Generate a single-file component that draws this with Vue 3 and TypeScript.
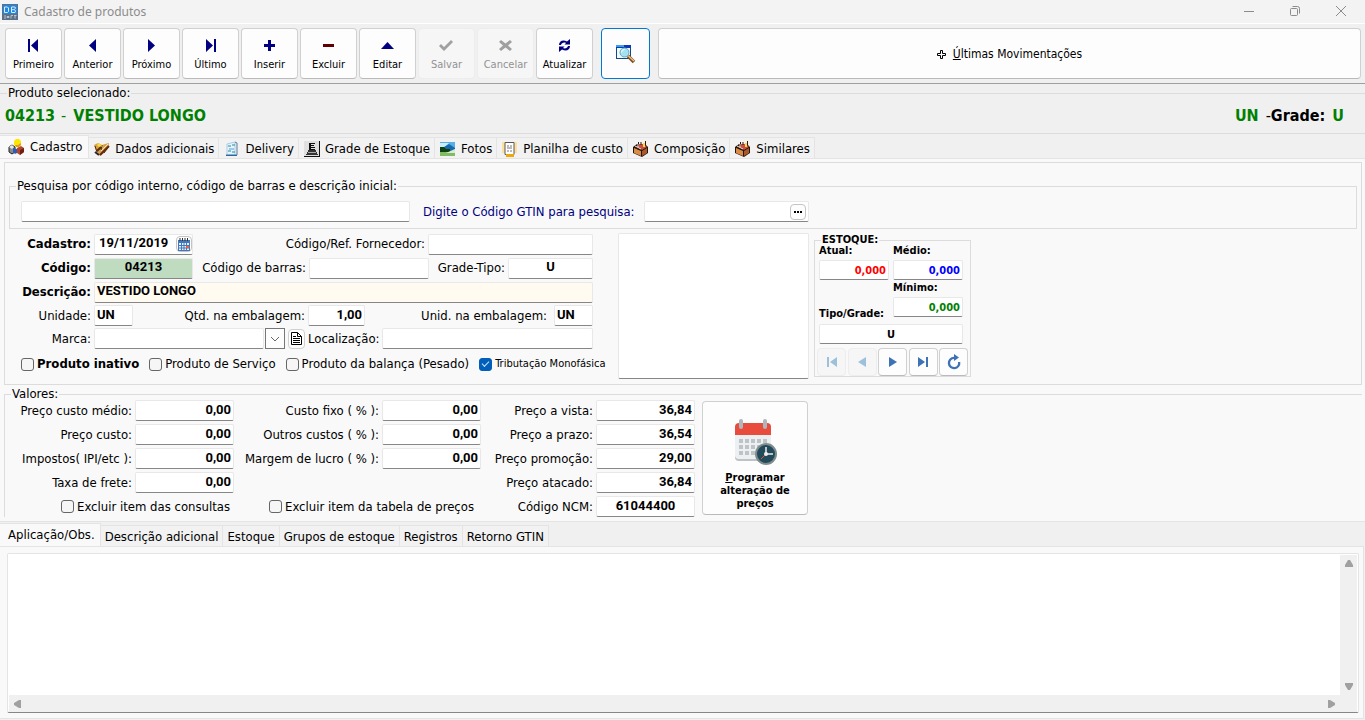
<script setup lang="ts">
import { reactive, ref } from 'vue'

interface NavAction {
  label: string
  path: string
  tone: 'navy' | 'maroon' | 'gray'
  disabled?: boolean
}

const actions: NavAction[] = [
  { label: 'Primeiro', tone: 'navy', path: 'M3 2h2v13H3zM13 2v13L6 8.5z' },
  { label: 'Anterior', tone: 'navy', path: 'M12 2v13L5 8.5z' },
  { label: 'Próximo', tone: 'navy', path: 'M5 2v13l7-6.5z' },
  { label: 'Último', tone: 'navy', path: 'M4 2v13l7-6.5zM12 2h2v13h-2z' },
  { label: 'Inserir', tone: 'navy', path: 'M7 3h3v4h4v3h-4v4H7v-4H3V7h4z' },
  { label: 'Excluir', tone: 'maroon', path: 'M3 7h11v3H3z' },
  { label: 'Editar', tone: 'navy', path: 'M2 12L8.5 5 15 12z' },
  { label: 'Salvar', tone: 'gray', disabled: true, path: 'M1 9l2-2 3 3 7-7 2 2-9 9z' },
  { label: 'Cancelar', tone: 'gray', disabled: true, path: 'M2 5l2-2 4.500 3.500L13 3l2 2-4 3.500 4 3.500-2 2-4.500-3.500L4 14l-2-2 4-3.500z' },
  { label: 'Atualizar', tone: 'navy', path: 'M3 8C3 4 7 2 11 4.500L14 2v5.500H8.500l1.500-1.500C8 5 5.500 6 5 8zM14 9c0 4-4 6-8 3.500L3 15V9.500h5.500L7 11C9 12 11.500 11 12 9z' }
]

const mainTabs = ['Cadastro', 'Dados adicionais', 'Delivery', 'Grade de Estoque', 'Fotos', 'Planilha de custo', 'Composição', 'Similares']
const noteTabs = ['Aplicação/Obs.', 'Descrição adicional', 'Estoque', 'Grupos de estoque', 'Registros', 'Retorno GTIN']
const activeMain = ref(0)
const activeNote = ref(0)

const stockNav = [
  { label: 'Primeiro estoque', path: 'M3 3h2v10H3zM13 3v10L6 8z', disabled: true },
  { label: 'Estoque anterior', path: 'M12 3v10L4 8z', disabled: true },
  { label: 'Próximo estoque', path: 'M4 3v10l8-5z', disabled: false },
  { label: 'Último estoque', path: 'M3 3v10l7-5zM11 3h2v10h-2z', disabled: false },
  { label: 'Atualizar estoque', path: 'M8 0l5 3.500L8 7V5a4 4 0 1 0 4 3h2.300A6.300 6.300 0 1 1 8 2.700z', disabled: false }
]

const product = reactive({
  search: '', gtin: '', date: '19/11/2019', ref: '', code: '04213', barcode: '', gridType: 'U',
  name: 'VESTIDO LONGO', unit: 'UN', packQty: '1,00', packUnit: 'UN', brand: '', place: '',
  inactive: false, service: false, scale: false, singlePhase: true,
  hideQueries: false, hidePrices: false, notes: ''
})

const stock = reactive({ current: '0,000', average: '0,000', minimum: '0,000', type: 'U' })

const costs = reactive([
  { id: 'avg', label: 'Preço custo médio:', value: '0,00' },
  { id: 'cost', label: 'Preço custo:', value: '0,00' },
  { id: 'tax', label: 'Impostos( IPI/etc ):', value: '0,00' },
  { id: 'freight', label: 'Taxa de frete:', value: '0,00' }
])
const margins = reactive([
  { id: 'fixed', label: 'Custo fixo ( % ):', value: '0,00' },
  { id: 'other', label: 'Outros custos ( % ):', value: '0,00' },
  { id: 'profit', label: 'Margem de lucro ( % ):', value: '0,00' }
])
const prices = reactive([
  { id: 'cash', label: 'Preço a vista:', value: '36,84', mid: false },
  { id: 'term', label: 'Preço a prazo:', value: '36,54', mid: false },
  { id: 'promo', label: 'Preço promoção:', value: '29,00', mid: false },
  { id: 'whole', label: 'Preço atacado:', value: '36,84', mid: false },
  { id: 'ncm', label: 'Código NCM:', value: '61044400', mid: true }
])
</script>

<template>
  <div class="window">
    <header class="titlebar">
      <svg class="logo" width="16" height="16" viewBox="0 0 16 16" aria-hidden="true">
        <rect width="16" height="16" fill="#5b6f86" />
        <rect x="1" y="1" width="14" height="9" fill="#2487dc" />
        <path d="M2.500 3h3l1 1v3.500l-1 1h-3zM9.500 3h3.500l.5 1-1 1.500 1 1.500-.5 1.500H9.500zM9.500 5.700h3" fill="none" stroke="#d5ecff" />
        <path d="M2 12h2M2 14h2M5 12.500v1h2v-1zM9 14.500v-3h2M12 11.500h2.500M13 12v2.500" stroke="#b9c3cd" fill="none" />
      </svg>
      <h1>Cadastro de produtos</h1>
      <div class="winbtns">
        <button type="button" aria-label="Minimizar"><svg width="12" height="12" viewBox="0 0 12 12"><path d="M1 6.500h10" /></svg></button>
        <button type="button" aria-label="Restaurar"><svg width="12" height="12" viewBox="0 0 12 12"><rect x="1.500" y="3.500" width="7" height="7" rx="1" /><path d="M3.500 1.500h5a2 2 0 0 1 2 2v5" /></svg></button>
        <button type="button" aria-label="Fechar"><svg width="12" height="12" viewBox="0 0 12 12"><path d="M1 1l10 10M11 1L1 11" /></svg></button>
      </div>
    </header>

    <nav class="toolbar">
      <button v-for="a in actions" :key="a.label" type="button" class="btn action" :disabled="a.disabled">
        <svg :class="a.tone" width="17" height="17" viewBox="0 0 17 17" aria-hidden="true"><path :d="a.path" /></svg>
        <span>{{ a.label }}</span>
      </button>
      <button type="button" class="btn find" aria-label="Localizar">
        <svg width="21" height="20" viewBox="0 0 21 20" aria-hidden="true">
          <rect x="1.500" y="2.500" width="14" height="12" fill="#eefafd" stroke="#16458a" />
          <path d="M1 1h15v3H1z" fill="#0838b4" /><path d="M1 1h8v2H1z" fill="#3a9fe8" />
          <circle cx="9.500" cy="8.500" r="4.500" fill="#a5e2f0" stroke="#68a5c4" />
          <path d="M6.500 8.500a3 3 0 0 1 3-3" stroke="#fff" fill="none" />
          <path d="M13 12l6 6" stroke="#79502a" stroke-width="3.500" /><path d="M13.500 12l5.500 5" stroke="#f1bd79" stroke-width="1.500" />
        </svg>
      </button>
      <button type="button" class="btn moves">
        <svg width="9" height="9" viewBox="0 0 9 9" aria-hidden="true"><path d="M3.500.5h2v3h3v2h-3v3h-2v-3h-3v-2h3z" fill="none" stroke="#000" /></svg>
        <span><u>Ú</u>ltimas Movimentações</span>
      </button>
    </nav>

    <fieldset class="selected">
      <legend>Produto selecionado:</legend>
      <div class="headline">
        <strong class="green">04213 <span class="dash">-</span> VESTIDO LONGO</strong>
        <strong class="unit"><span class="green">UN</span><span><span class="thin">-</span>Grade:</span><span class="green">U</span></strong>
      </div>
    </fieldset>

    <div class="tabs" role="tablist">
      <button v-for="(t, i) in mainTabs" :key="t" type="button" role="tab" :aria-selected="activeMain === i" class="tab" :class="{ on: activeMain === i }" @click="activeMain = i">
        <svg width="16" height="16" viewBox="0 0 16 16" aria-hidden="true">
          <g v-if="i === 0">
            <path d="M1 8l3-2 3 2v5l-3 2-3-2z" fill="#8a8a8a" stroke="#222" /><path d="M1 8l3-2 2 2-2 2z" fill="#e8e8e8" />
            <path d="M9 9l4-2 3 2v4l-4 3-3-2z" fill="#b8442c" /><path d="M12 11l4-2v4l-4 3z" fill="#6d2114" /><path d="M5 9l4 1v4l-2 1-2-2z" fill="#285fbb" />
            <path d="M8 0h3l2 2v4l-2 2H8L6 6V2z" fill="#ffe600" /><path d="M7 6l1 2h3l2-2v-2l-3 2z" fill="#e09c1a" />
          </g>
          <g v-else-if="i === 1">
            <path d="M0 4l4-2 4 2 3-1 4-1-1 6-4 4-4 3-4-5z" fill="#dba04b" /><path d="M1 5l2 6M8 4l-1 5M14 6l-4 6" stroke="#4c2c12" /><path d="M4 3l3 3" stroke="#f6df30" stroke-width="3" />
            <path d="M3 10l4-4M6 14l9-9" stroke="#5d2d11" stroke-width="2" /><path d="M7 10l7-7" stroke="#fbe4c0" /><path d="M1 11l4 3" stroke="#2b2233" stroke-width="2" />
          </g>
          <g v-else-if="i === 2">
            <path d="M3 3l8-2v13H3z" fill="#e5f3fc" stroke="#a9cbe6" /><path d="M11 1l2 1v12H2" fill="none" stroke="#55789c" />
            <path d="M4 5h3M8 4h3M4 10h3M8 11h3" stroke="#238e9c" /><path d="M5 7h5v2H5z" fill="#9ec9e8" /><path d="M2 14.500h11" stroke="#286bac" />
          </g>
          <g v-else-if="i === 3">
            <path d="M0 0h16v16H0z" fill="#e0e0e0" /><path d="M15 0h1v16H0v-1h15z" fill="#111" /><path d="M5 2h6v1H7v1h3v1H7v1h4v1H7v1h4v1H5z" fill="#111" /><path d="M4 9h8v2h1v2h1v1H2v-1h1v-2h1z" fill="#333" /><path d="M4 11.500h8" stroke="#aaa" />
          </g>
          <g v-else-if="i === 4">
            <path d="M0 1h15v14H0z" fill="#5aaee6" /><path d="M0 2h9l-4 4H0z" fill="#c9ecf8" /><path d="M4 6l5-3 6 4v3H4z" fill="#1769ae" /><path d="M0 6h4l2 2h4v3H0z" fill="#0f4014" /><path d="M0 11h15v4H0z" fill="#81bb64" /><path d="M6 12l9-4v4z" fill="#d9ecd0" />
          </g>
          <g v-else-if="i === 5">
            <path d="M0 1h15v11H0z" fill="#ffdf9f" /><path d="M3 1.500h9v12H3z" fill="#fff" stroke="#55585c" /><path d="M5 5h2m1 0h2M5 7h5M5 10h2m1 0h2" stroke="#777" /><path d="M4 13h8v3H4z" fill="#eda80c" />
          </g>
          <g v-else>
            <path d="M0 6l4-3h8l3 3v6l-6 4-9-4z" fill="#25150f" /><path d="M1 7l7 3v5l-7-3z" fill="#dc8b45" /><path d="M9 10l5-3v5l-5 3z" fill="#a85a2a" />
            <path d="M3 5h3V3h5l3 3-5 3z" fill="#c95040" /><path d="M2 5l6 3M5 3v3" stroke="#f3e4d8" /><path d="M10 2h2v4h-2z" fill="#ffd84a" /><path d="M8 1v3M12.500 0v4M5.500 1v2" stroke="#2a1712" />
          </g>
        </svg>
        <span>{{ t }}</span>
      </button>
    </div>

    <main class="page">
      <section class="card">
        <fieldset class="searchbox">
          <legend><label for="search">Pesquisa por código interno, código de barras e descrição inicial:</label></legend>
          <div class="searchrow">
            <input id="search" v-model="product.search" class="field w-search" type="text" />
            <label for="gtin" class="navytext">Digite o Código GTIN para pesquisa:</label>
            <div class="field combo w-gtin">
              <input id="gtin" v-model="product.gtin" type="text" />
              <button type="button" class="mini" aria-label="Pesquisar GTIN"><svg width="8" height="2" viewBox="0 0 8 2"><path d="M0 0h2v2H0zM3 0h2v2H3zM6 0h2v2H6z" /></svg></button>
            </div>
          </div>
        </fieldset>

        <div class="details">
          <div class="form">
            <div class="row tall">
              <label for="date" class="lead bold">Cadastro:</label>
              <div class="field combo date w-base">
                <input id="date" v-model="product.date" class="num pad" type="text" />
                <button type="button" class="mini" aria-label="Calendário">
                  <svg width="12" height="13" viewBox="0 0 12 13"><path d="M0 2h12v11H0z" fill="#4478bd" /><path d="M1 5h10v7H1z" fill="#e8f1fb" /><path d="M1 7.500h10M1 10h10M3.500 5v7M6 5v7M8.500 5v7" stroke="#4478bd" /><path d="M2 0v3M4.500 0v3M7 0v3M9.500 0v3" stroke="#333" /><path d="M8 8h3v2H8z" fill="#ed623d" /></svg>
                </button>
              </div>
              <label for="ref" class="push">Código/Ref. Fornecedor:</label>
              <input id="ref" v-model="product.ref" class="field w-ref" type="text" />
            </div>
            <div class="row tall">
              <label for="code" class="lead bold">Código:</label>
              <input id="code" v-model="product.code" class="field num center code w-base" type="text" />
              <label for="barcode" class="push">Código de barras:</label>
              <input id="barcode" v-model="product.barcode" class="field w-bar" type="text" />
              <label for="gridType" class="w-grid">Grade-Tipo:</label>
              <input id="gridType" v-model="product.gridType" class="field num center w-type" type="text" />
            </div>
            <div class="row tall">
              <label for="name" class="lead bold">Descrição:</label>
              <input id="name" v-model="product.name" class="field num cream grow" type="text" />
            </div>
            <div class="row">
              <label for="unit" class="lead">Unidade:</label>
              <input id="unit" v-model="product.unit" class="field num w-unit" type="text" />
              <label for="packQty" class="w-qtylabel">Qtd. na embalagem:</label>
              <input id="packQty" v-model="product.packQty" class="field num right w-qty" type="text" />
              <label for="packUnit" class="push wide">Unid. na embalagem:</label>
              <input id="packUnit" v-model="product.packUnit" class="field num w-unit" type="text" />
            </div>
            <div class="row">
              <label for="brand" class="lead">Marca:</label>
              <div class="brand">
                <div class="field brandtext"></div>
                <div class="arrow"><svg width="10" height="6" viewBox="0 0 10 6"><path d="M1 1l4 4 4-4" /></svg></div>
                <select id="brand" v-model="product.brand"><option value=""></option></select>
              </div>
              <button type="button" class="doc" aria-label="Cadastro de marcas"><svg width="11" height="13" viewBox="0 0 11 13"><path d="M.5.5h6l4 4v8H.5z" fill="#fff" /><path d="M6.500.5v4h4M2 4.500h3M2 6.500h7M2 8.500h7M2 10.500h7" fill="none" /></svg></button>
              <label for="place" class="w-place">Localização:</label>
              <input id="place" v-model="product.place" class="field grow" type="text" />
            </div>
            <div class="checks">
              <label class="bold"><input v-model="product.inactive" type="checkbox" />Produto inativo</label>
              <label><input v-model="product.service" type="checkbox" />Produto de Serviço</label>
              <label><input v-model="product.scale" type="checkbox" />Produto da balança (Pesado)</label>
              <label class="small"><input v-model="product.singlePhase" type="checkbox" />Tributação Monofásica</label>
            </div>
          </div>

          <div class="field photo"></div>

          <fieldset class="stock">
            <legend>ESTOQUE:</legend>
            <div class="stockgrid">
              <div class="cell"><label for="current">Atual:</label><input id="current" v-model="stock.current" class="field red" type="text" /></div>
              <div class="cell"><label for="average">Médio:</label><input id="average" v-model="stock.average" class="field blue" type="text" /></div>
              <label for="type" class="typelabel">Tipo/Grade:</label>
              <div class="cell"><label for="minimum">Mínimo:</label><input id="minimum" v-model="stock.minimum" class="field dkgreen" type="text" /></div>
              <input id="type" v-model="stock.type" class="field center full" type="text" />
            </div>
            <div class="stocknav">
              <button v-for="n in stockNav" :key="n.label" type="button" class="btn" :disabled="n.disabled" :aria-label="n.label">
                <svg width="16" height="16" viewBox="0 0 16 16"><path :d="n.path" /></svg>
              </button>
            </div>
          </fieldset>
        </div>
      </section>

      <fieldset class="values">
        <legend>Valores:</legend>
        <div class="valuesrow">
          <div class="valcols">
            <div class="valcol a">
              <div v-for="c in costs" :key="c.id" class="val"><label :for="c.id">{{ c.label }}</label><input :id="c.id" v-model="c.value" class="field num right w-base" type="text" /></div>
              <label class="check indent"><input v-model="product.hideQueries" type="checkbox" />Excluir item das consultas</label>
            </div>
            <div class="valcol b">
              <div v-for="m in margins" :key="m.id" class="val"><label :for="m.id">{{ m.label }}</label><input :id="m.id" v-model="m.value" class="field num right w-base" type="text" /></div>
              <label class="check last"><input v-model="product.hidePrices" type="checkbox" />Excluir item da tabela de preços</label>
            </div>
            <div class="valcol c">
              <div v-for="p in prices" :key="p.id" class="val"><label :for="p.id">{{ p.label }}</label><input :id="p.id" v-model="p.value" class="field num w-base" :class="p.mid ? 'center' : 'right'" type="text" /></div>
            </div>
          </div>
          <button type="button" class="btn schedule">
            <svg width="43" height="46" viewBox="0 0 43 46" aria-hidden="true">
              <path d="M1 15h36v23a4 4 0 0 1-4 4H5a4 4 0 0 1-4-4z" fill="#ecf0f1" /><path d="M1 37v1a4 4 0 0 0 4 4h20v-2H5a4 4 0 0 1-4-3z" fill="#bdc3c7" />
              <path d="M1 16V8a4 4 0 0 1 4-4h28a4 4 0 0 1 4 4v8z" fill="#e74c3c" />
              <rect x="5" width="4" height="10" rx="2" fill="#aeb7bb" /><rect x="29" width="4" height="10" rx="2" fill="#aeb7bb" />
              <path d="M5 20h4v4H5zm6 0h4v4h-4zm6 0h4v4h-4zm6 0h4v4h-4zm6 0h4v4h-4zM5 26h4v4H5zm6 0h4v4h-4zm6 0h4v4h-4zm6 0h4v4h-4zM5 32h4v4H5zm6 0h4v4h-4zm6 0h4v4h-4z" fill="#bdc3c7" />
              <circle cx="32" cy="35" r="10" fill="#214b5a" stroke="#7f8c8d" stroke-width="2" />
              <path d="M32 28v7h7" fill="none" stroke="#bdc3c7" stroke-width="2" /><path d="M32 35l-5 5" stroke="#e74c3c" /><circle cx="32" cy="35" r="2" fill="#ecf0f1" />
            </svg>
            <span><u>P</u>rogramar alteração de preços</span>
          </button>
        </div>
      </fieldset>
    </main>

    <div class="tabs notes-tabs" role="tablist">
      <button v-for="(t, i) in noteTabs" :key="t" type="button" role="tab" :aria-selected="activeNote === i" class="tab" :class="{ on: activeNote === i }" @click="activeNote = i">{{ t }}</button>
    </div>
    <section class="notes">
      <div class="memo">
        <textarea v-model="product.notes" aria-label="Aplicação/Obs."></textarea>
        <div class="vbar">
          <button type="button" aria-label="Rolar para cima"><svg width="8" height="7" viewBox="0 0 8 7"><path d="M3 0h2l3 5v2H0V5z" /></svg></button>
          <button type="button" aria-label="Rolar para baixo"><svg width="8" height="7" viewBox="0 0 8 7"><path d="M0 0h8v2L5 7H3L0 2z" /></svg></button>
        </div>
        <div class="hbar">
          <button type="button" aria-label="Rolar para a esquerda"><svg width="7" height="8" viewBox="0 0 7 8"><path d="M7 0v8H5L0 5V3l5-3z" /></svg></button>
          <button type="button" aria-label="Rolar para a direita"><svg width="7" height="8" viewBox="0 0 7 8"><path d="M0 0v8h2l5-3V3L2 0z" /></svg></button>
        </div>
        <div class="corner"></div>
      </div>
    </section>
  </div>
</template>

<style>
body { margin: 0; background: #f0f0f0; }
</style>

<style scoped>
* { box-sizing: border-box; }
.window { display: flex; flex-direction: column; min-height: 100vh; background: #f0f0f0; color: #000; font: 13px/16px "DejaVu Sans Condensed", "DejaVu Sans", "Noto Sans", sans-serif; white-space: nowrap; }
button, input, select, textarea { margin: 0; padding: 0; font: inherit; color: inherit; }
button { cursor: pointer; }
fieldset { margin: 0; padding: 0; border: 1px solid #dcdcdc; min-width: 0; }
legend { padding: 0 1px; height: 16px; }
.bold { font-weight: bold; }
.green { color: #008000; }

.titlebar { display: flex; align-items: center; height: 24px; padding: 0 1px 0 2px; background: #f3f3f3; border-bottom: 1px solid #fff; }
h1 { flex: 1; margin: 0 0 0 6px; font-family: "Noto Sans", sans-serif; font-size: 12px; font-weight: normal; color: #8c8c8c; }
.winbtns { display: flex; align-self: flex-start; }
.winbtns button { display: grid; place-items: center; width: 46px; height: 21px; border: 0; background: none; }
.winbtns svg { fill: none; stroke: #8c8c8c; }

.toolbar { display: flex; gap: 2px; height: 60px; padding: 4px 4px 4px 5px; border-bottom: 1px solid #a0a0a0; }
.btn { background: #fdfdfd; border: 1px solid #d0d0d0; border-bottom-color: #bababa; border-radius: 4px; }
.action { display: flex; flex-direction: column; align-items: center; width: 57px; padding-top: 8px; font-size: 11px; line-height: 14px; }
.action span { margin-top: 4px; }
.btn:disabled { background: #f6f6f6; border-color: #ededed; color: #929292; cursor: default; }
.navy { fill: #000080; }
.maroon { fill: #600000; }
.gray { fill: #a0a0a0; }
.find { display: grid; place-items: center; width: 49px; margin-left: 6px; border-color: #0078d4; }
.moves { flex: 1; display: flex; align-items: center; justify-content: center; gap: 7px; margin-left: 6px; padding-top: 1px; font-size: 12px; }

.selected { margin-top: 1px; border-left: 0; border-right: 0; padding: 0 21px 7px 5px; }
.selected legend { margin-left: 2px; }
.headline { display: flex; justify-content: space-between; font-size: 16px; line-height: 20px; padding-top: 5px; }
.dash { font-weight: normal; margin: 0 2px 0 1px; }
.thin { font-weight: normal; }
.unit { display: flex; gap: 7px; }

.tabs { display: flex; align-items: flex-end; height: 24px; }
.tab { display: flex; align-items: center; gap: 5px; height: 21px; padding: 1px 4px 0 5px; border: 1px solid #e4e4e4; border-bottom: 0; border-left-width: 0; background: #f2f2f2; }
.tab.on { height: 23px; padding: 0 6px 0 8px; gap: 6px; background: #f9f9f9; }

.page { display: flex; flex-direction: column; gap: 1px; padding: 3px 3px 4px 4px; background: #f9f9f9; border-top: 1px solid #e4e4e4; border-bottom: 1px solid #e4e4e4; }
.card { border: 1px solid #dcdcdc; padding: 15px 4px 5px; }
.searchbox { padding: 0 0 6px 6px; }
.searchrow { display: flex; align-items: center; margin-left: 5px; padding-top: 7px; }
.navytext { color: #000080; margin: 0 13px; width: 208px; }
.field { height: 21px; border: 1px solid #e8e8e8; border-bottom-color: #868686; border-radius: 2px; background: #fff; padding: 0 2px; outline: 0; }
.w-search { width: 389px; }
.w-gtin { width: 165px; }
.w-base { width: 99px; }
.w-ref { width: 165px; }
.w-bar { width: 120px; }
.w-type { width: 85px; }
.w-unit { width: 39px; }
.w-qty { width: 57px; }
.combo { display: flex; align-items: center; }
.combo input { flex: 1; min-width: 0; border: 0; background: none; outline: 0; }
.date { padding-right: 0; }
.mini { display: grid; place-items: center; width: 16px; height: 16px; border: 1px solid #c4c4c4; border-radius: 4px; background: #fdfdfd; }
.num { font-family: Roboto, "Liberation Sans", sans-serif; font-weight: bold; }
input.num { padding-bottom: 3px; }
.combo input.pad { padding-left: 2px; }
.right { text-align: right; }
.center { text-align: center; }
.code { background: #c0dcc0; }
.cream { background: #fffbf0; }
.grow { flex: 1; min-width: 0; }

.details { display: flex; align-items: flex-start; padding-top: 4px; }
.form { display: flex; flex-direction: column; gap: 2px; width: 584px; }
.row { display: flex; align-items: center; gap: 3px; height: 21px; }
.tall { height: 22px; }
.lead { width: 82px; text-align: right; }
.push { flex: 1; text-align: right; }
.wide { padding-right: 4px; }
.w-grid { width: 73px; text-align: right; }
.w-qtylabel { width: 169px; text-align: right; }
.w-place { width: 71px; text-align: right; }
.brand { position: relative; display: flex; gap: 1px; width: 191px; }
.brandtext { flex: 1; }
.arrow { display: grid; place-items: center; width: 20px; border: 1px solid #777; background: #fdfdfd; }
.arrow svg { fill: none; stroke: #666; }
.brand select { position: absolute; inset: 0; width: 100%; appearance: none; border: 0; background: transparent; }
.doc { display: grid; place-items: center; width: 17px; height: 20px; border: 1px solid #d0d0d0; border-radius: 4px; background: #fdfdfd; }
.doc svg { stroke: #000; }
.checks { display: flex; align-items: center; height: 26px; padding-left: 12px; gap: 10px; }
.checks label, .check { display: flex; align-items: center; gap: 3px; }
.checks .small { font-size: 11px; }
input[type="checkbox"] { appearance: none; width: 13px; height: 13px; border: 1px solid #666; border-radius: 3px; background: #f6f6f6; }
input[type="checkbox"]:checked { display: grid; place-items: center; border-color: #005fb8; background: #005fb8; }
input[type="checkbox"]:checked::after { content: ""; width: 6px; height: 3px; margin-top: -2px; border: solid #cfe2f4; border-width: 0 0 1px 1px; transform: rotate(-45deg); }

.photo { width: 191px; height: 146px; margin-left: 25px; }
.stock { width: 157px; margin: 2px 0 0 5px; padding: 0 2px 0 2px; font-size: 11px; font-weight: bold; }
.stock legend { height: 10px; line-height: 10px; margin-left: 4px; }
.stockgrid { display: grid; grid-template-columns: 70px 70px; gap: 1px 4px; margin-top: -1px; padding: 0 2px; line-height: 14px; }
.cell { display: flex; flex-direction: column; gap: 2px; }
.stock .field { width: 100%; height: 20px; }
.stock .cell .field { text-align: right; }
.typelabel { align-self: end; margin-bottom: -4px; }
.stock .full { grid-column: 1 / 3; margin-top: 6px; }
.red { color: #f00; }
.blue { color: #00f; }
.dkgreen { color: #008000; }
.stocknav { display: flex; justify-content: space-between; padding-top: 4px; }
.stocknav .btn { display: grid; place-items: center; width: 29px; height: 28px; }
.stocknav svg { fill: #3d72b4; }
.stocknav .btn:disabled svg { fill: #9dc1da; }

.values { border-right: 0; border-bottom: 0; }
.values legend { margin-left: 6px; }
.valuesrow { display: flex; align-items: flex-start; margin-top: -2px; }
.valcols { display: flex; }
.valcol { display: flex; flex-direction: column; gap: 3px; }
.val { display: flex; align-items: center; justify-content: flex-end; gap: 3px; }
.a { width: 229px; }
.b { width: 247px; }
.c { width: 214px; }
.check { height: 21px; }
.indent { padding-left: 56px; }
.last { margin-top: auto; padding-left: 35px; }
.schedule { display: flex; flex-direction: column; align-items: center; justify-content: center; gap: 6px; width: 106px; height: 114px; margin: 1px 0 0 7px; padding: 13px 8px 0; font-size: 11px; line-height: 13px; font-weight: bold; font-kerning: none; white-space: normal; }

.notes-tabs .tab { padding: 1px 4px 0 4px; }
.notes-tabs .tab.on { padding: 0 5px 0 8px; }
.notes { flex: 1; display: flex; padding: 6px 4px 5px 7px; margin: 0 1px 1px 0; background: #f9f9f9; border: 1px solid #e4e4e4; border-left: 0; }
.memo { flex: 1; display: grid; grid-template: 1fr 17px / 1fr 17px; padding: 1px 1px 0; border: 1px solid #e4e4e4; border-bottom-color: #868686; border-radius: 2px; background: #fff; }
.memo textarea { display: block; width: 100%; min-height: 100px; height: 100%; border: 0; outline: 0; resize: none; background: none; }
.vbar, .hbar { display: flex; justify-content: space-between; background: #f0f0f0; }
.vbar { flex-direction: column; }
.vbar button, .hbar button { display: grid; place-items: center; width: 17px; height: 17px; border: 0; background: none; }
.memo svg { fill: #a0a0a0; }
.corner { background: #f0f0f0; }
</style>
